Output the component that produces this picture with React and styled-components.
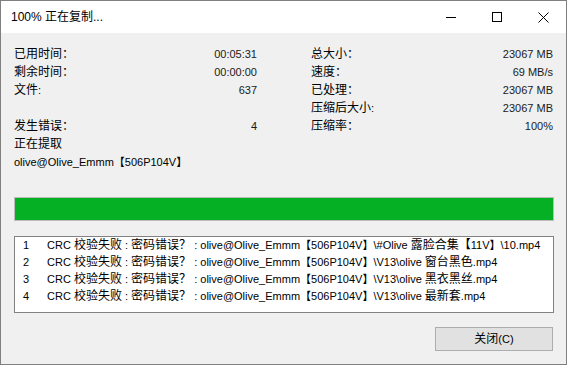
import React from "react";
import styled, { createGlobalStyle } from "styled-components";

const GlobalStyle = createGlobalStyle`
  html, body {
    margin: 0;
    background: #ffffff;
  }
  body {
    font-family: "Liberation Sans", "Noto Sans CJK SC", sans-serif;
    font-size: 11px;
    color: #000;
  }
`

const leftStats = [
  { label: "已用时间：", value: "00:05:31" },
  { label: "剩余时间：", value: "00:00:00" },
  { label: "文件:", value: "637" },
  { label: "", value: "" },
  { label: "发生错误：", value: "4" },
  { label: "正在提取", value: "" },
  { label: "olive@Olive_Emmm【506P104V】", value: "" },
]

const rightStats = [
  { label: "总大小：", value: "23067 MB" },
  { label: "速度：", value: "69 MB/s" },
  { label: "已处理：", value: "23067 MB" },
  { label: "压缩后大小:", value: "23067 MB" },
  { label: "压缩率：", value: "100%" },
]

const errors = [
  "CRC 校验失败 : 密码错误？ : olive@Olive_Emmm【506P104V】\\#Olive 露脸合集【11V】\\10.mp4",
  "CRC 校验失败 : 密码错误？ : olive@Olive_Emmm【506P104V】\\V13\\olive 窗台黑色.mp4",
  "CRC 校验失败 : 密码错误？ : olive@Olive_Emmm【506P104V】\\V13\\olive 黑衣黑丝.mp4",
  "CRC 校验失败 : 密码错误？ : olive@Olive_Emmm【506P104V】\\V13\\olive 最新套.mp4",
]

// Chinese runs are drawn a size larger than the latin text, as in the dialog
const Cjk = styled.span`
  font-family: "Noto Sans CJK SC", sans-serif;
  font-size: ${p => (p.$bracket ? "11px" : "12px")};
  line-height: 0;
`

const Mixed = ({ text }) => {
  const parts = text.split(/([\u3000-\u9fff\uff00-\uffef]+)/)
  return parts.map((p, i) =>
    i % 2 ? <Cjk key={i} $bracket={/^[【】]+$/.test(p)}>{p}</Cjk> : p
  )
}

const Window = styled.div`
  box-sizing: border-box;
  width: 567px;
  height: 365px;
  border: 1px solid #7f7f7f;
  display: flex;
  flex-direction: column;
  background: #f0f0f0;
`
const TitleBar = styled.div`
  height: 32px;
  background: #ffffff;
  display: flex;
  align-items: center;
`
const Title = styled.div`
  flex: 1;
  padding-left: 10px;
  line-height: 32px;
  font-size: 12px;
  white-space: nowrap;
`
const CaptionButton = styled.div`
  width: 46px;
  height: 32px;
  display: flex;
  align-items: center;
  justify-content: center;
  svg { display: block; }
`
const Body = styled.div`
  flex: 1;
  display: flex;
  flex-direction: column;
  padding: 12px 13px 0 13px;
`
const Stats = styled.div`
  display: grid;
  grid-template-columns: 243px 242px;
  column-gap: 54px;
`
const Column = styled.div`
  display: flex;
  flex-direction: column;
`
const StatRow = styled.div`
  height: 18px;
  line-height: 18px;
  display: flex;
  justify-content: space-between;
  white-space: nowrap;
`
const Value = styled.span`
  color: #1a1a1a;
`
const Progress = styled.div`
  box-sizing: border-box;
  margin-top: 26px;
  margin-right: -1px;
  height: 24px;
  border: 1px solid #bcbcbc;
  background: #e6e6e6;
`
const Fill = styled.div`
  height: 100%;
  background: #06b025;
`
const List = styled.div`
  box-sizing: border-box;
  margin-top: 15px;
  margin-right: -1px;
  height: 77px;
  background: #ffffff;
  border: 1px solid #828282;
  overflow: hidden;
`
const ListRow = styled.div`
  height: 17px;
  line-height: 17px;
  display: flex;
  white-space: nowrap;
`
const Num = styled.span`
  width: 24px;
  padding-left: 8px;
  flex-shrink: 0;
`
const Footer = styled.div`
  margin-top: 14px;
  display: flex;
  justify-content: flex-end;
`
const Button = styled.button`
  box-sizing: border-box;
  width: 118px;
  height: 24px;
  background: #e1e1e1;
  border: 1px solid #adadad;
  font-family: inherit;
  font-size: 11px;
  color: #000;
  padding: 0;
`

const App = () => {
  const pct = 100
  return (
    <>
      <GlobalStyle />
      <Window>
        <TitleBar>
          <Title>100% 正在复制...</Title>
          <CaptionButton>
            <svg width="10" height="10" viewBox="0 0 10 10">
              <path d="M0 5.5h10" stroke="#000" strokeWidth="1" />
            </svg>
          </CaptionButton>
          <CaptionButton>
            <svg width="10" height="10" viewBox="0 0 10 10">
              <rect x="0.5" y="0.5" width="9" height="9" fill="none" stroke="#000" strokeWidth="1" />
            </svg>
          </CaptionButton>
          <CaptionButton>
            <svg width="11" height="11" viewBox="0 0 11 11">
              <path d="M0.5 0.5L10.5 10.5M10.5 0.5L0.5 10.5" stroke="#000" strokeWidth="1" />
            </svg>
          </CaptionButton>
        </TitleBar>
        <Body>
          <Stats>
            <Column>
              {leftStats.map((s, i) => (
                <StatRow key={i}>
                  <span><Mixed text={s.label} /></span>
                  <Value>{s.value}</Value>
                </StatRow>
              ))}
            </Column>
            <Column>
              {rightStats.map((s, i) => (
                <StatRow key={i}>
                  <span><Mixed text={s.label} /></span>
                  <Value>{s.value}</Value>
                </StatRow>
              ))}
            </Column>
          </Stats>
          <Progress>
            <Fill style={{ width: `${pct}%` }} />
          </Progress>
          <List>
            {errors.map((e, i) => (
              <ListRow key={i}>
                <Num>{i + 1}</Num>
                <span><Mixed text={e} /></span>
              </ListRow>
            ))}
          </List>
          <Footer>
            <Button><Mixed text="关闭(C)" /></Button>
          </Footer>
        </Body>
      </Window>
    </>
  )
}

export default App;
